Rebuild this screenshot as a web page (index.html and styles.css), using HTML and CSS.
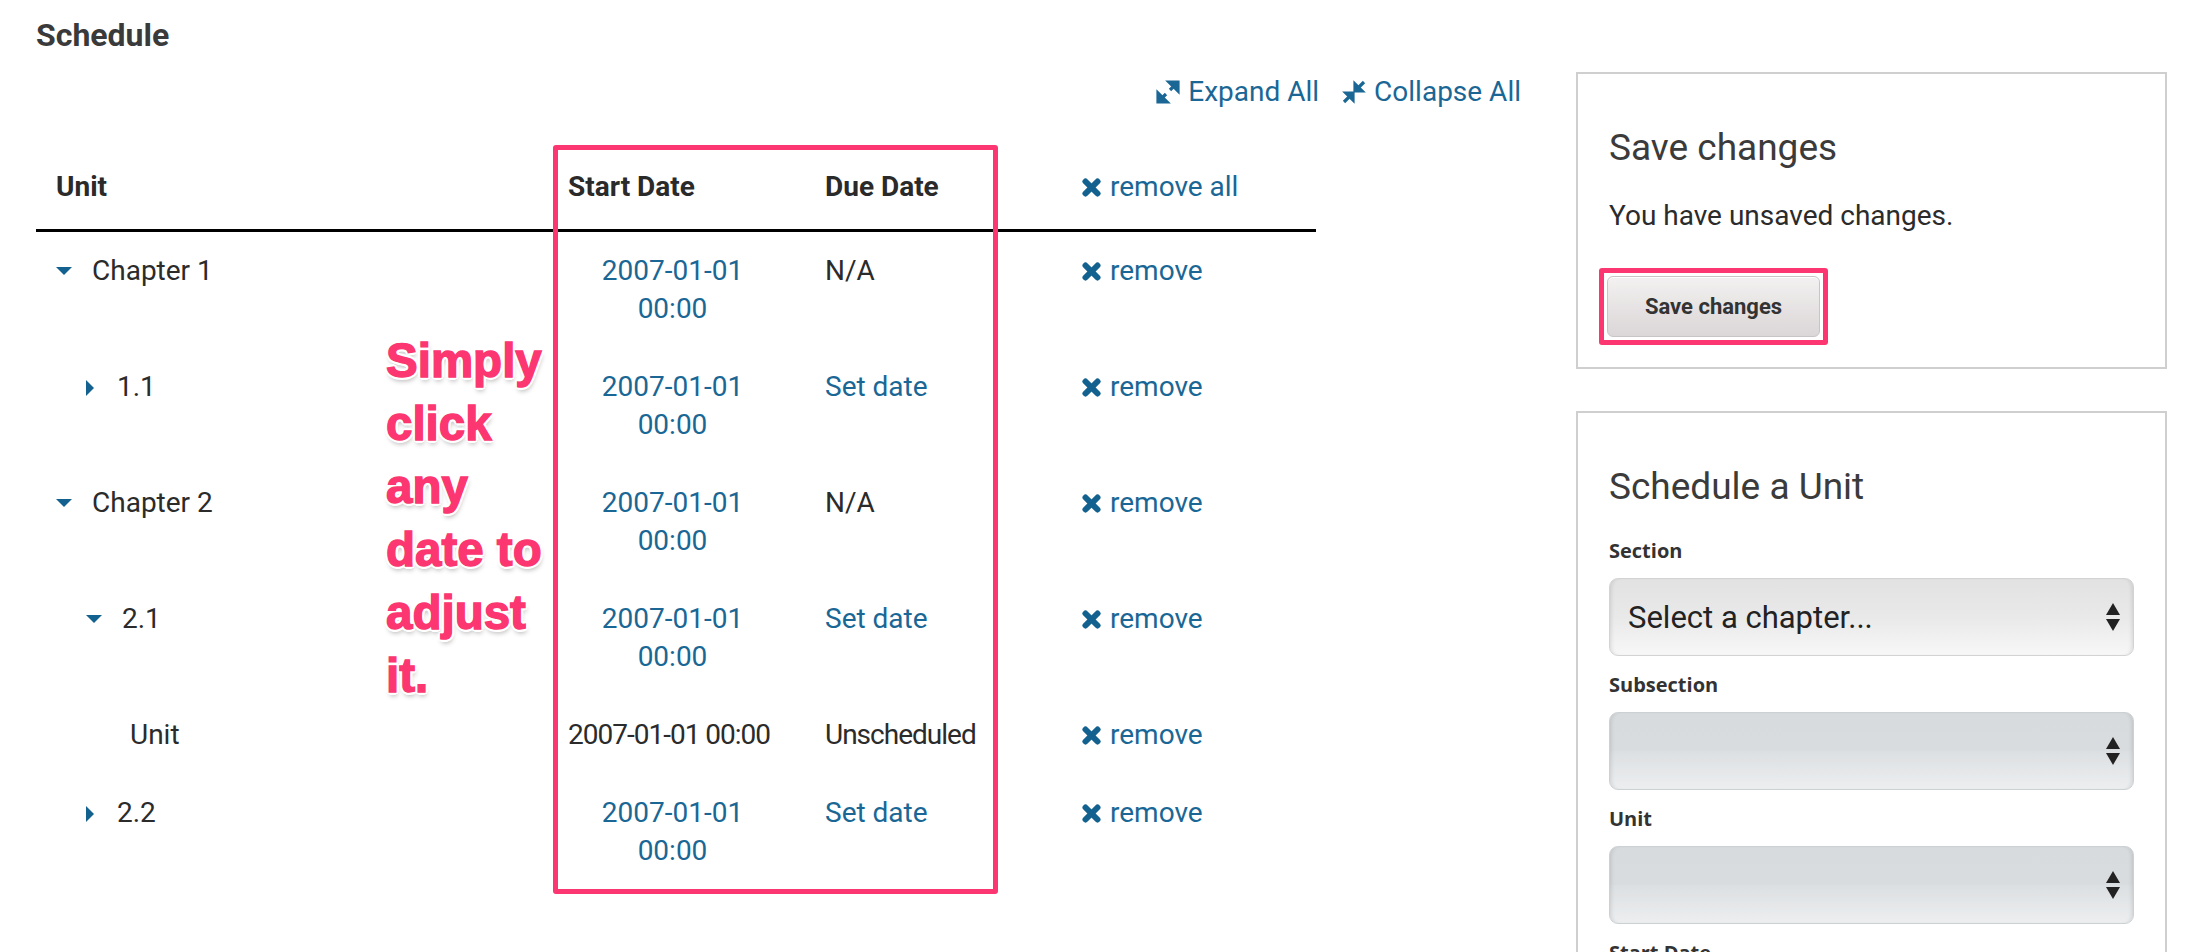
FILE: index.html
```html
<!DOCTYPE html>
<html lang="en">
<head>
  <meta charset="UTF-8">
  <title>Schedule</title>
  <link rel="stylesheet" href="styles.css">
</head>
<body>
  <div class="page">
    <h2 class="page-title">Schedule</h2>

    <div class="layout">
      <div class="main">
        <div class="toolbar">
          <a class="tool-link" href="#">
            <svg class="tool-icon" viewBox="0 0 24 24">
              <polygon points="13,2 22,2 22,11" />
              <line x1="19" y1="5" x2="14" y2="10" />
              <polygon points="2,13 2,22 11,22" />
              <line x1="5" y1="19" x2="10" y2="14" />
            </svg>
            Expand All
          </a>
          <a class="tool-link" href="#">
            <svg class="tool-icon" viewBox="0 0 24 24">
              <polygon points="13,4 13,11 20,11" />
              <line x1="16" y1="8" x2="22" y2="2" />
              <polygon points="4,13 11,13 11,20" />
              <line x1="8" y1="16" x2="2" y2="22" />
            </svg>
            Collapse All
          </a>
        </div>

        <div class="table-wrap">
          <table class="schedule">
            <colgroup>
              <col class="col-unit">
              <col class="col-date">
              <col class="col-date">
              <col class="col-action">
            </colgroup>
            <thead>
              <tr>
                <th>Unit</th>
                <th>Start Date</th>
                <th>Due Date</th>
                <th class="action-head">
                  <a class="remove" href="#">
                    <svg class="x-icon" viewBox="0 0 19 19"><line x1="3.5" y1="3.5" x2="15.5" y2="15.5" /><line x1="15.5" y1="3.5" x2="3.5" y2="15.5" /></svg>remove all
                  </a>
                </th>
              </tr>
            </thead>
            <tbody>
              <tr>
                <td><span class="caret caret-down"></span>Chapter 1</td>
                <td><a class="date-link" href="#">2007-01-01 00:00</a></td>
                <td>N/A</td>
                <td><a class="remove" href="#"><svg class="x-icon" viewBox="0 0 19 19"><line x1="3.5" y1="3.5" x2="15.5" y2="15.5" /><line x1="15.5" y1="3.5" x2="3.5" y2="15.5" /></svg>remove</a></td>
              </tr>
              <tr>
                <td class="level-1"><span class="caret caret-right"></span>1.1</td>
                <td><a class="date-link" href="#">2007-01-01 00:00</a></td>
                <td><a href="#">Set date</a></td>
                <td><a class="remove" href="#"><svg class="x-icon" viewBox="0 0 19 19"><line x1="3.5" y1="3.5" x2="15.5" y2="15.5" /><line x1="15.5" y1="3.5" x2="3.5" y2="15.5" /></svg>remove</a></td>
              </tr>
              <tr>
                <td><span class="caret caret-down"></span>Chapter 2</td>
                <td><a class="date-link" href="#">2007-01-01 00:00</a></td>
                <td>N/A</td>
                <td><a class="remove" href="#"><svg class="x-icon" viewBox="0 0 19 19"><line x1="3.5" y1="3.5" x2="15.5" y2="15.5" /><line x1="15.5" y1="3.5" x2="3.5" y2="15.5" /></svg>remove</a></td>
              </tr>
              <tr>
                <td class="level-1"><span class="caret caret-down"></span>2.1</td>
                <td><a class="date-link" href="#">2007-01-01 00:00</a></td>
                <td><a href="#">Set date</a></td>
                <td><a class="remove" href="#"><svg class="x-icon" viewBox="0 0 19 19"><line x1="3.5" y1="3.5" x2="15.5" y2="15.5" /><line x1="15.5" y1="3.5" x2="3.5" y2="15.5" /></svg>remove</a></td>
              </tr>
              <tr>
                <td class="level-2">Unit</td>
                <td class="nowrap">2007-01-01 00:00</td>
                <td class="nowrap">Unscheduled</td>
                <td><a class="remove" href="#"><svg class="x-icon" viewBox="0 0 19 19"><line x1="3.5" y1="3.5" x2="15.5" y2="15.5" /><line x1="15.5" y1="3.5" x2="3.5" y2="15.5" /></svg>remove</a></td>
              </tr>
              <tr>
                <td class="level-1"><span class="caret caret-right"></span>2.2</td>
                <td><a class="date-link" href="#">2007-01-01 00:00</a></td>
                <td><a href="#">Set date</a></td>
                <td><a class="remove" href="#"><svg class="x-icon" viewBox="0 0 19 19"><line x1="3.5" y1="3.5" x2="15.5" y2="15.5" /><line x1="15.5" y1="3.5" x2="3.5" y2="15.5" /></svg>remove</a></td>
              </tr>
            </tbody>
          </table>

          <!-- annotation drawn over the table -->
          <div class="callout-box"></div>
          <div class="callout-text">Simply click any date to adjust it.</div>
        </div>
      </div>

      <aside class="sidebar">
        <div class="panel">
          <h3 class="panel-title">Save changes</h3>
          <p class="panel-text">You have unsaved changes.</p>
          <div class="save-frame">
            <button class="save-button">Save changes</button>
          </div>
        </div>

        <div class="panel panel-form">
          <h3 class="panel-title">Schedule a Unit</h3>

          <div class="field-label">Section</div>
          <div class="select">
            <span>Select a chapter...</span>
            <svg class="select-arrows" viewBox="0 0 14 28"><polygon points="7,0 14,12 0,12" /><polygon points="0,16 14,16 7,28" /></svg>
          </div>

          <div class="field-label">Subsection</div>
          <div class="select select-disabled">
            <span></span>
            <svg class="select-arrows" viewBox="0 0 14 28"><polygon points="7,0 14,12 0,12" /><polygon points="0,16 14,16 7,28" /></svg>
          </div>

          <div class="field-label">Unit</div>
          <div class="select select-disabled">
            <span></span>
            <svg class="select-arrows" viewBox="0 0 14 28"><polygon points="7,0 14,12 0,12" /><polygon points="0,16 14,16 7,28" /></svg>
          </div>

          <div class="field-label">Start Date</div>
        </div>
      </aside>
    </div>
  </div>
</body>
</html>
```

FILE: styles.css
```css
/* Basic reset */
html, body {
  margin: 0;
  padding: 0;
}

body {
  font-family: Roboto, "Liberation Sans", sans-serif;
  color: #2b2b2b;
  background: #fff;
  overflow: hidden;
}

a {
  color: #1a6795;
  text-decoration: none;
}

.page {
  padding: 16px 19px 0 36px;
}

.page-title {
  margin: 0 0 18px;
  font-size: 32px;
  line-height: 38px;
  font-weight: 700;
  color: #3a3a3a;
}

/* main column + sidebar */
.layout {
  display: grid;
  grid-template-columns: 1fr 591px;
  gap: 55px;
  align-items: start;
}

/* Expand / Collapse links */
.toolbar {
  display: flex;
  justify-content: flex-end;
  gap: 23px;
  font-size: 28px;
  line-height: 38px;
  margin-top: 1px;
}

.tool-link {
  display: flex;
  align-items: center;
  gap: 8px;
}

.tool-icon {
  width: 24px;
  height: 24px;
  fill: #1a6795;
  stroke: #1a6795;
  stroke-width: 3.2;
}

/* Schedule table */
.table-wrap {
  position: relative;
  margin-top: 36px;
  width: 1280px;
}

.schedule {
  width: 1280px;
  table-layout: fixed;
  border-collapse: collapse;
  font-size: 28px;
  line-height: 38px;
}

.col-unit { width: 512px; }
.col-date { width: 257px; }
.col-action { width: 254px; }

.schedule th {
  text-align: left;
  font-weight: 700;
  color: #2a2a2a;
  padding: 21px 20px 23px;
  border-bottom: 3px solid #000;
}

.schedule .action-head {
  font-weight: 400;
}

.schedule td {
  padding: 20px;
  vertical-align: top;
}

.schedule .nowrap {
  white-space: nowrap;
  letter-spacing: -1px;
}

.level-1 { padding-left: 50px !important; }
.level-2 { padding-left: 94px !important; }

.caret {
  display: inline-block;
  width: 0;
  height: 0;
  vertical-align: middle;
}

.caret-down {
  border-left: 8px solid transparent;
  border-right: 8px solid transparent;
  border-top: 8px solid #12618f;
  margin: 0 20px 4px 0;
}

.caret-right {
  border-top: 8px solid transparent;
  border-bottom: 8px solid transparent;
  border-left: 8px solid #12618f;
  margin: 0 23px 2px 0;
}

.date-link {
  display: block;
  padding: 0 28px 0 20px;
  text-align: center;
}

.remove {
  white-space: nowrap;
}

.x-icon {
  width: 19px;
  height: 19px;
  margin-right: 9px;
  vertical-align: -1px;
  stroke: #12618f;
  stroke-width: 6;
  stroke-linecap: round;
}

/* pink annotation */
.callout-box {
  position: absolute;
  left: 517px;
  top: -2px;
  width: 445px;
  height: 749px;
  box-sizing: border-box;
  border: 5px solid #fb3670;
  border-radius: 3px;
}

.callout-text {
  position: absolute;
  left: 350px;
  top: 182px;
  width: 172px;
  font-family: "Liberation Sans", Arial, sans-serif;
  font-weight: 700;
  font-size: 47.5px;
  line-height: 63px;
  color: #fb3670;
  -webkit-text-stroke: 1.4px #fb3670;
  text-shadow:
    -2px -2px 0 #fff, 2px -2px 0 #fff, -2px 2px 0 #fff, 2px 2px 0 #fff,
    0 -3px 0 #fff, 0 3px 0 #fff, -3px 0 0 #fff, 3px 0 0 #fff,
    1px 4px 5px rgba(0, 0, 0, 0.3);
}

/* Sidebar panels */
.panel {
  border: 2px solid #cfcfcf;
  padding: 52px 31px 22px;
}

.panel-form {
  margin-top: 42px;
  padding-bottom: 40px;
}

.panel-title {
  margin: 0 0 27px;
  font-size: 37px;
  line-height: 44px;
  font-weight: 400;
  color: #3b3b3b;
}

.panel-text {
  margin: 0 0 33px;
  font-size: 28px;
  line-height: 38px;
  color: #2b2b2b;
}

.save-frame {
  display: flex;
  width: fit-content;
  margin-left: -10px;
  padding: 3px;
  border: 5px solid #fb3670;
  border-radius: 3px;
}

.save-button {
  width: 213px;
  height: 61px;
  font-family: Roboto, "Liberation Sans", sans-serif;
  font-size: 22px;
  font-weight: 700;
  color: #333;
  background: linear-gradient(#f3f1f1, #dbd6d7);
  border: 1px solid #c9c5c6;
  border-radius: 6px;
  box-shadow: inset 0 1px 0 #fff;
}

.field-label {
  margin: 15px 0 13px;
  font-family: "Open Sans", sans-serif;
  font-size: 20px;
  line-height: 28px;
  font-weight: 700;
  color: #333;
}

.panel-title + .field-label {
  margin-top: 28px;
}

.select {
  display: flex;
  align-items: center;
  justify-content: space-between;
  height: 78px;
  box-sizing: border-box;
  padding: 0 13px 0 18px;
  border: 1px solid #d3d3d3;
  border-radius: 9px;
  background: linear-gradient(#e2e2e2, #e9e9e9 50%, #f7f7f7);
  box-shadow: inset 4px 0 4px -3px rgba(0, 0, 0, 0.12), inset -4px 0 4px -3px rgba(0, 0, 0, 0.12);
  font-size: 31px;
  color: #222;
}

.select-disabled {
  border-color: #ccd1d4;
  background: linear-gradient(#d8dbdd 0%, #d9dcde 49%, #dcdfe1 50%, #eceef0 100%);
}

.select-arrows {
  width: 14px;
  height: 28px;
  fill: #222;
}
```
